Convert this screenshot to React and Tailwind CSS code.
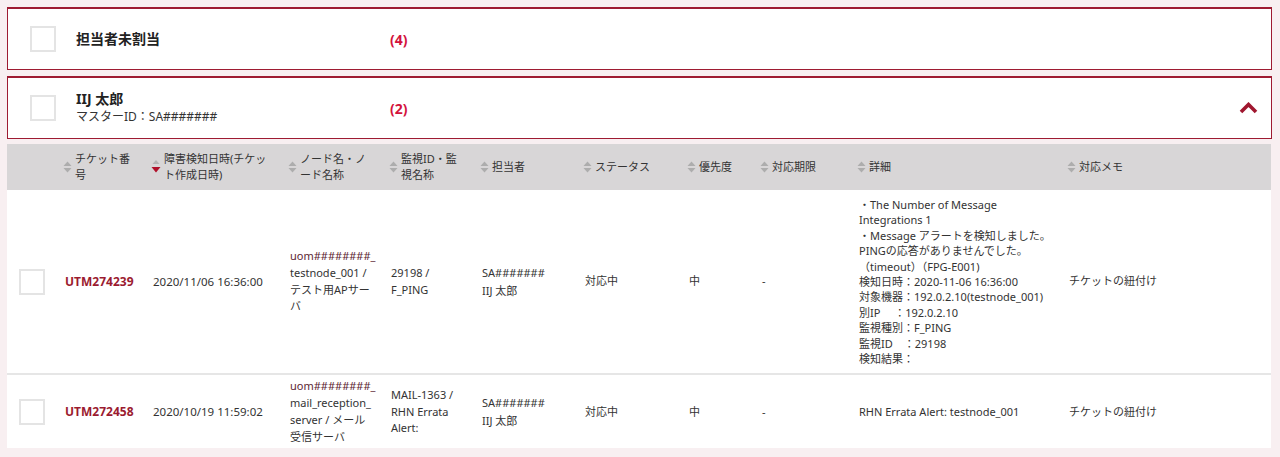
import React from 'react';

const FONT = { fontFamily: '"Noto Sans", "Noto Sans CJK JP", sans-serif' };

const SortIcon = ({ active }) => {
  if (active) {
    return (
      <svg width="10" height="14" viewBox="0 0 10 14" className="shrink-0">
        <polygon points="5,0 8.5,4 1.5,4" fill="#b3b3b3" />
        <polygon points="0.5,7 9.5,7 5,12.5" fill="#b0102a" />
      </svg>
    );
  }
  return (
    <svg width="9" height="12" viewBox="0 0 9 12" className="shrink-0">
      <polygon points="4.5,0.5 8.5,5 0.5,5" fill="#adadad" />
      <polygon points="0.5,7 8.5,7 4.5,11.5" fill="#adadad" />
    </svg>
  );
};

const Checkbox = () => (
  <div className="w-[26px] h-[26px] bg-white border-2 border-[#e4e4e4] shrink-0" />
);

const GroupCard = ({ title, sub, count, open }) => (
  <div className="bg-white border border-t-2 border-[#9e1b32] h-[63px] flex items-center pl-[22px] pr-[13px]">
    <Checkbox />
    <div className="w-[334px] pl-[20px] text-[#222]">
      <div className="text-[14px] font-bold leading-[18px]">{title}</div>
      {sub && <div className="text-[12px] leading-[18px] text-[#333]">{sub}</div>}
    </div>
    <div className="text-[14px] font-bold text-[#d3123c]">({count})</div>
    <div className="flex-1" />
    {open && (
      <svg width="19" height="12" viewBox="0 0 19 12">
        <polyline points="2,10 9.5,2.5 17,10" fill="none" stroke="#a0172f" strokeWidth="3.6" />
      </svg>
    )}
  </div>
);

const columns = [
  { w: 50, label: null },
  { w: 88, label: ['チケット番', '号'] },
  { w: 137, label: ['障害検知日時(チケッ', 'ト作成日時)'], active: true },
  { w: 101, label: ['ノード名・ノ', 'ード名称'] },
  { w: 91, label: ['監視ID・監', '視名称'] },
  { w: 103, label: ['担当者'] },
  { w: 104, label: ['ステータス'] },
  { w: 73, label: ['優先度'] },
  { w: 97, label: ['対応期限'] },
  { w: 210, label: ['詳細'] },
  { w: 210, label: ['対応メモ'] },
];

const rows = [
  {
    id: 'UTM274239',
    date: '2020/11/06 16:36:00',
    node: ['uom########_', 'testnode_001 /', 'テスト用APサー', 'バ'],
    mon: ['29198 /', 'F_PING'],
    status: '対応中',
    prio: '中',
    detail: [
      '・The Number of Message',
      'Integrations 1',
      '・Message アラートを検知しました。',
      'PINGの応答がありませんでした。',
      '（timeout）（FPG-E001)',
      '検知日時：2020-11-06 16:36:00',
      '対象機器：192.0.2.10(testnode_001)',
      '別IP\u3000 ：192.0.2.10',
      '監視種別：F_PING',
      '監視ID\u3000：29198',
      '検知結果：',
    ],
    py: 'py-[7px]',
  },
  {
    id: 'UTM272458',
    date: '2020/10/19 11:59:02',
    node: ['uom########_', 'mail_reception_', 'server / メール', '受信サーバ'],
    mon: ['MAIL-1363 /', 'RHN Errata', 'Alert:'],
    status: '対応中',
    prio: '中',
    detail: ['RHN Errata Alert: testnode_001'],
    py: 'py-[3px]',
  },
];

const Lines = ({ items, className = '' }) => (
  <div className={className}>
    {items.map((t, i) => (
      <div key={i} className="whitespace-pre">{t}</div>
    ))}
  </div>
);

export default function App() {
  return (
    <div className="min-h-screen bg-[#f8eff1] pl-[7px] pr-[8px] pt-[7px] pb-[9px]" style={FONT}>
      <div className="flex flex-col gap-[6px]">
        <GroupCard title="担当者未割当" count={4} />
        <GroupCard title="IIJ 太郎" sub="マスターID：SA#######" count={2} open />
      </div>
      <table className="mt-[5px] w-[1264px] table-fixed border-collapse text-[11px] text-[#333]">
        <colgroup>
          {columns.map((c, i) => (
            <col key={i} style={{ width: c.w }} />
          ))}
        </colgroup>
        <thead>
          <tr className="bg-[#d8d6d7] h-[46px]">
            {columns.map((c, i) => (
              <th key={i} className="font-normal text-left align-middle pl-[6px] pr-[2px]">
                {c.label && (
                  <div className="flex items-center gap-[3px] leading-[16px]">
                    <SortIcon active={c.active} />
                    <Lines items={c.label} />
                  </div>
                )}
              </th>
            ))}
          </tr>
        </thead>
        <tbody>
          {rows.map((r, i) => (
            <tr key={r.id} className={`bg-white ${i > 0 ? 'border-t-2 border-[#e6e6e6]' : ''}`}>
              <td className={`align-middle pl-[12px] ${r.py}`}>
                <Checkbox />
              </td>
              <td className="align-middle pl-[8px] text-[12px] font-bold text-[#9b1b30]">{r.id}</td>
              <td className="align-middle pl-[8px] text-[11.5px]">{r.date}</td>
              <td className={`align-middle pl-[8px] leading-[16.7px] ${r.py}`}>
                <div className="text-[#5e2633] whitespace-pre">{r.node[0]}</div>
                <Lines items={r.node.slice(1)} />
              </td>
              <td className="align-middle pl-[8px] leading-[16.7px]">
                <Lines items={r.mon} />
              </td>
              <td className="align-middle pl-[8px] leading-[17.5px]">
                <div>SA#######</div>
                <div>IIJ 太郎</div>
              </td>
              <td className="align-middle pl-[8px]">{r.status}</td>
              <td className="align-middle pl-[8px]">{r.prio}</td>
              <td className="align-middle pl-[8px]">-</td>
              <td className={`align-middle pl-[8px] leading-[15.4px] ${r.py}`}>
                <Lines items={r.detail} />
              </td>
              <td className="align-middle pl-[8px]">チケットの紐付け</td>
            </tr>
          ))}
        </tbody>
      </table>
    </div>
  );
}
